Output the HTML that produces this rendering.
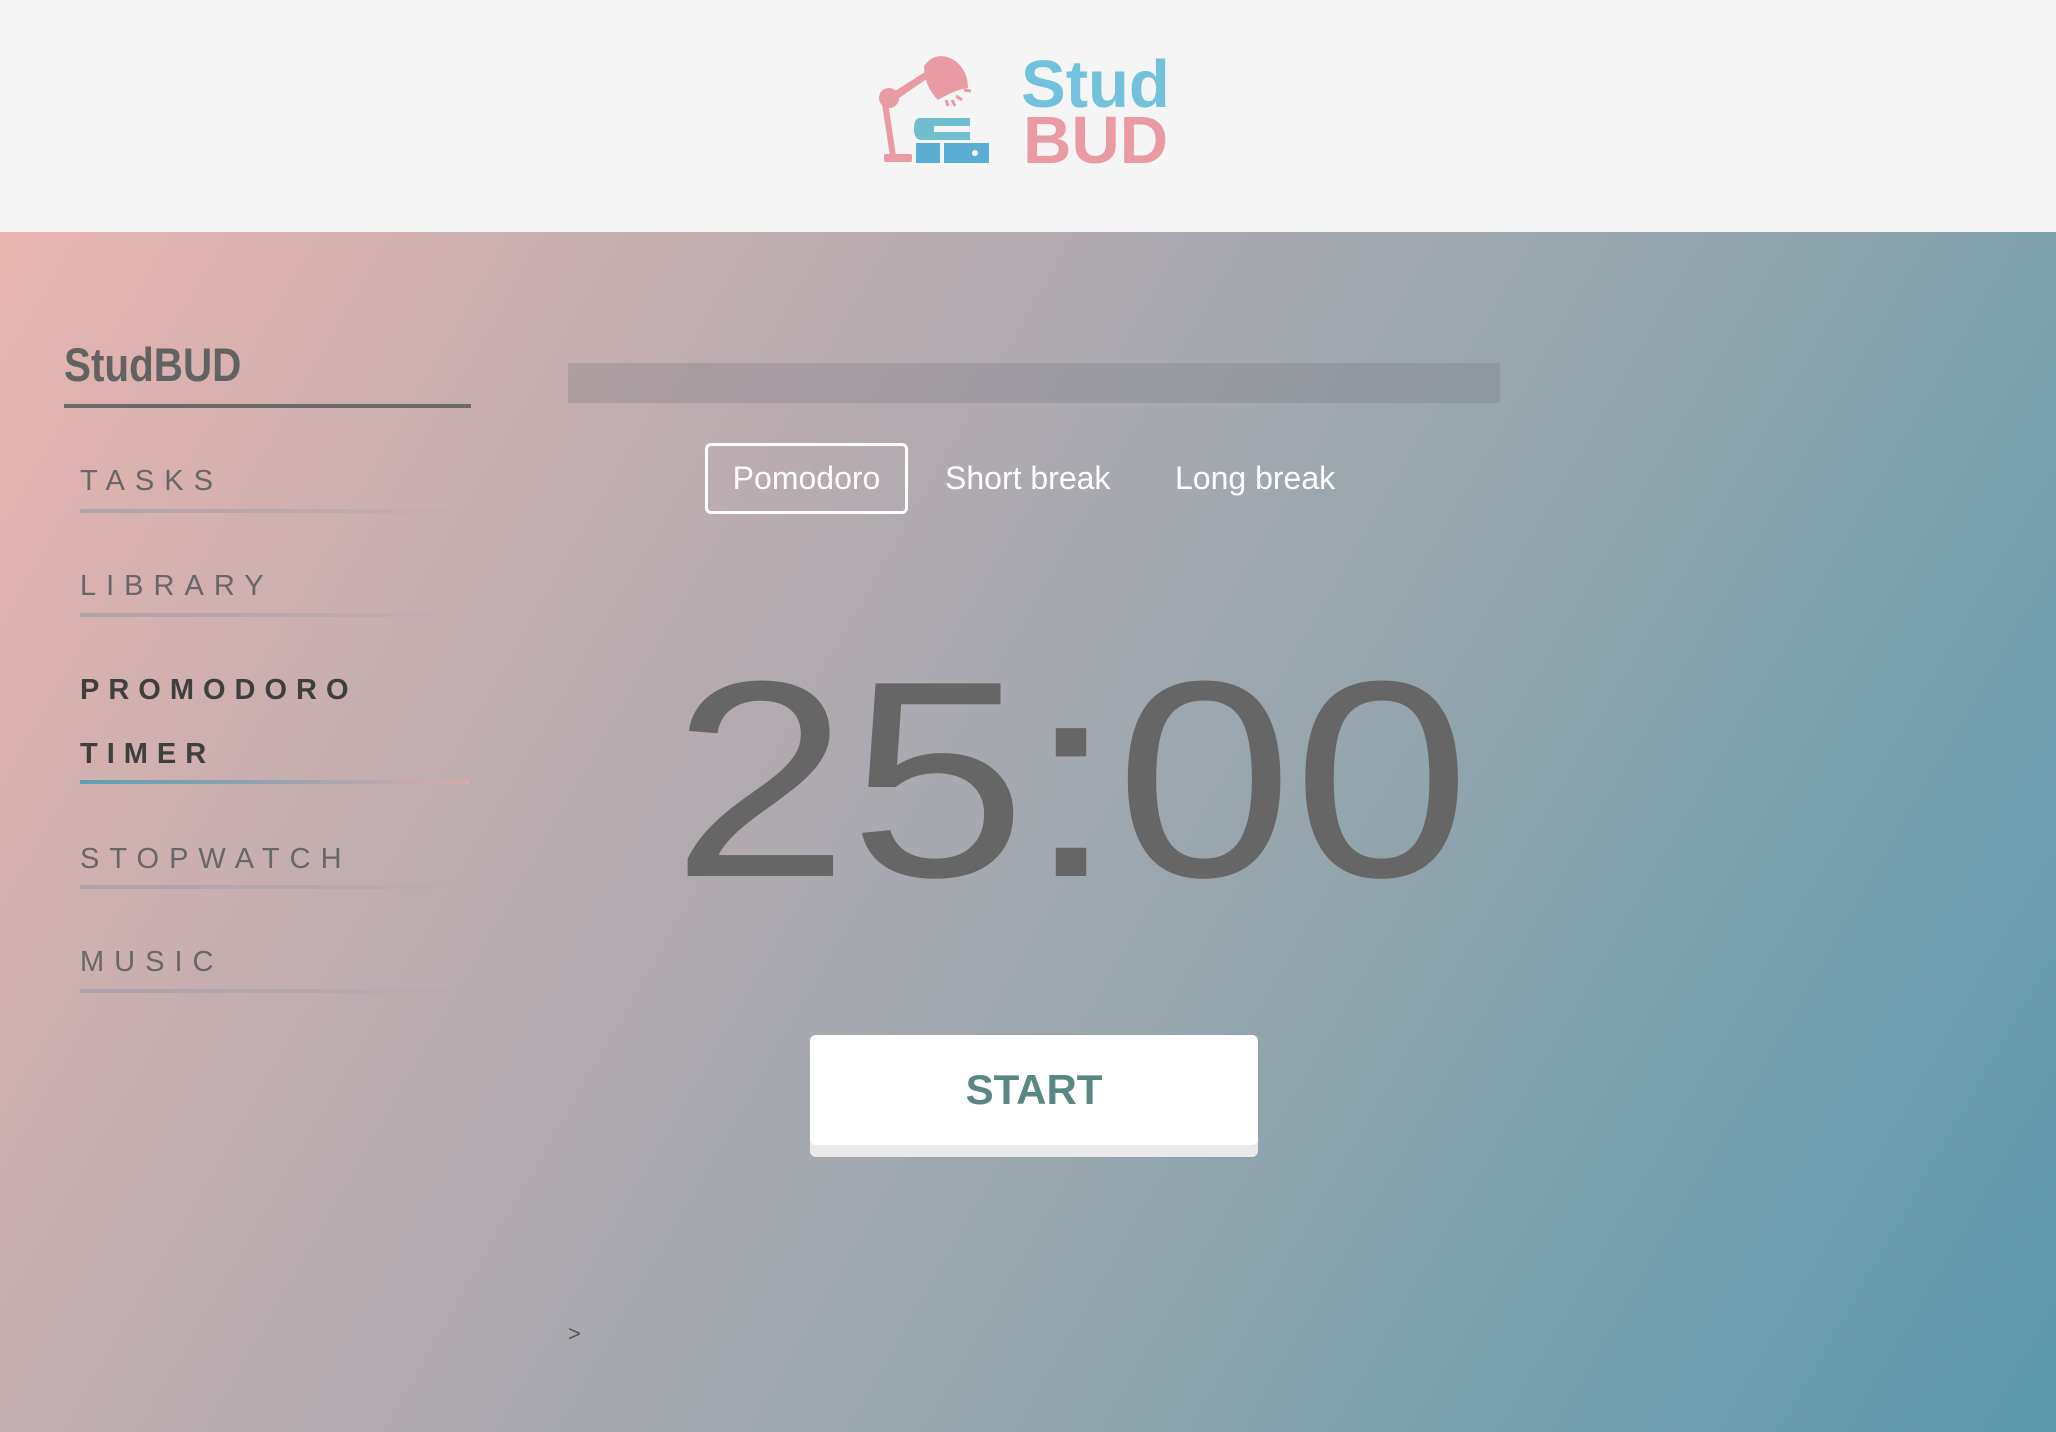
<!DOCTYPE html>
<html><head><meta charset="utf-8"><style>
*{margin:0;padding:0;box-sizing:border-box}
body{width:2056px;height:1432px;overflow:hidden;font-family:"Liberation Sans",Arial,sans-serif;position:relative;background:#f5f5f5}
#hdr{position:absolute;left:0;top:0;width:2056px;height:232px;background:#f5f5f5}
#main{position:absolute;left:0;top:232px;width:2056px;height:1200px;background:linear-gradient(120deg,#e9b4b0 0%,#c3aeb0 25%,#a9a9b0 45%,#8fa4ac 65%,#6f9fae 85%,#5b98aa 100%)}
.abs{position:absolute}
.lt{font-weight:bold;font-size:67px;line-height:1}
.nav{position:absolute;left:80px;font-size:29px;letter-spacing:10px;color:#676767;line-height:1}
.nav.b{font-weight:bold;color:#3f3f3f;letter-spacing:9px}
.ul{position:absolute;left:80px;width:390px;height:4px;background:linear-gradient(90deg,rgba(160,160,170,.8),rgba(170,160,170,.5) 60%,rgba(200,170,175,0))}
.tab{position:absolute;top:443px;height:71px;color:#fff;font-size:32px;line-height:71px}
</style></head><body>
<div id="hdr">
<svg class="abs" style="left:876px;top:50px" width="116" height="118" viewBox="0 0 116 118">
 <g fill="#ea9aa2">
  <circle cx="13" cy="48" r="10"/>
  <path d="M16 43 L52 20 L55 26 L20 50Z"/>
  <path d="M12 52 L20 106 L14 106 L6 54Z"/>
  <rect x="8" y="104" width="28" height="8" rx="2"/>
  <path d="M48 16 Q60 0 78 10 Q92 20 92 38 Q78 40 62 50 Q48 36 48 16Z"/>
  <path d="M70 50 l2 6 M80 46 l6 4 M88 40 l7 1 M76 50 l3 6" stroke="#ea9aa2" stroke-width="3"/>
 </g>
 <g fill="#6fbfcf">
  <path d="M44 68 h50 v8 h-36 v6 h36 v8 h-48 q-8 0 -8 -11 q0 -11 6 -11Z"/>
  <rect x="40" y="93" width="24" height="20" fill="#5aaed3"/>
  <rect x="68" y="93" width="45" height="20" fill="#5aaed3"/>
  <circle cx="99" cy="103" r="3" fill="#fff"/>
 </g>
</svg>
<div class="abs lt" style="left:1021px;top:51px;color:#73c2dc">Stud</div>
<div class="abs lt" style="left:1023px;top:107px;color:#ea9aa2">BUD</div>
</div>
<div id="main"></div>
<div class="abs" style="left:64px;top:341px;font-size:47px;font-weight:bold;color:#626262;transform:scaleX(.86);transform-origin:left;line-height:1">StudBUD</div>
<div class="abs" style="left:64px;top:404px;width:407px;height:4px;background:#6a6a6a"></div>
<div class="nav" style="top:467px">TASKS</div><div class="ul" style="top:509px"></div>
<div class="nav" style="top:572px">LIBRARY</div><div class="ul" style="top:613px"></div>
<div class="nav b" style="top:676px">PROMODORO</div>
<div class="nav b" style="top:740px">TIMER</div>
<div class="ul" style="top:780px;background:linear-gradient(90deg,#5a9fb5,#9aa3b0 50%,rgba(230,170,170,.6))"></div>
<div class="nav" style="top:845px">STOPWATCH</div><div class="ul" style="top:885px"></div>
<div class="nav" style="top:948px">MUSIC</div><div class="ul" style="top:989px"></div>
<div class="abs" style="left:568px;top:363px;width:932px;height:40px;background:rgba(120,120,125,.3)"></div>
<div class="tab" style="left:705px;width:203px;border:3px solid #fff;border-radius:6px;line-height:65px;text-align:center">Pomodoro</div>
<div class="tab" style="left:945px">Short break</div>
<div class="tab" style="left:1175px">Long break</div>
<div class="abs" style="left:671px;top:640px;width:800px;text-align:center;font-size:280px;line-height:1;color:#666;transform:scaleX(1.14);transform-origin:center">25:00</div>
<div class="abs" style="left:810px;top:1035px;width:448px;height:122px;background:#e9e9e9;border-radius:6px"></div>
<div class="abs" style="left:810px;top:1035px;width:448px;height:110px;background:#fff;border-radius:6px;text-align:center;line-height:110px;font-size:42px;font-weight:bold;color:#5b8783">START</div>
<div class="abs" style="left:568px;top:1321px;font-size:22px;color:#555">&gt;</div>
</body></html>
